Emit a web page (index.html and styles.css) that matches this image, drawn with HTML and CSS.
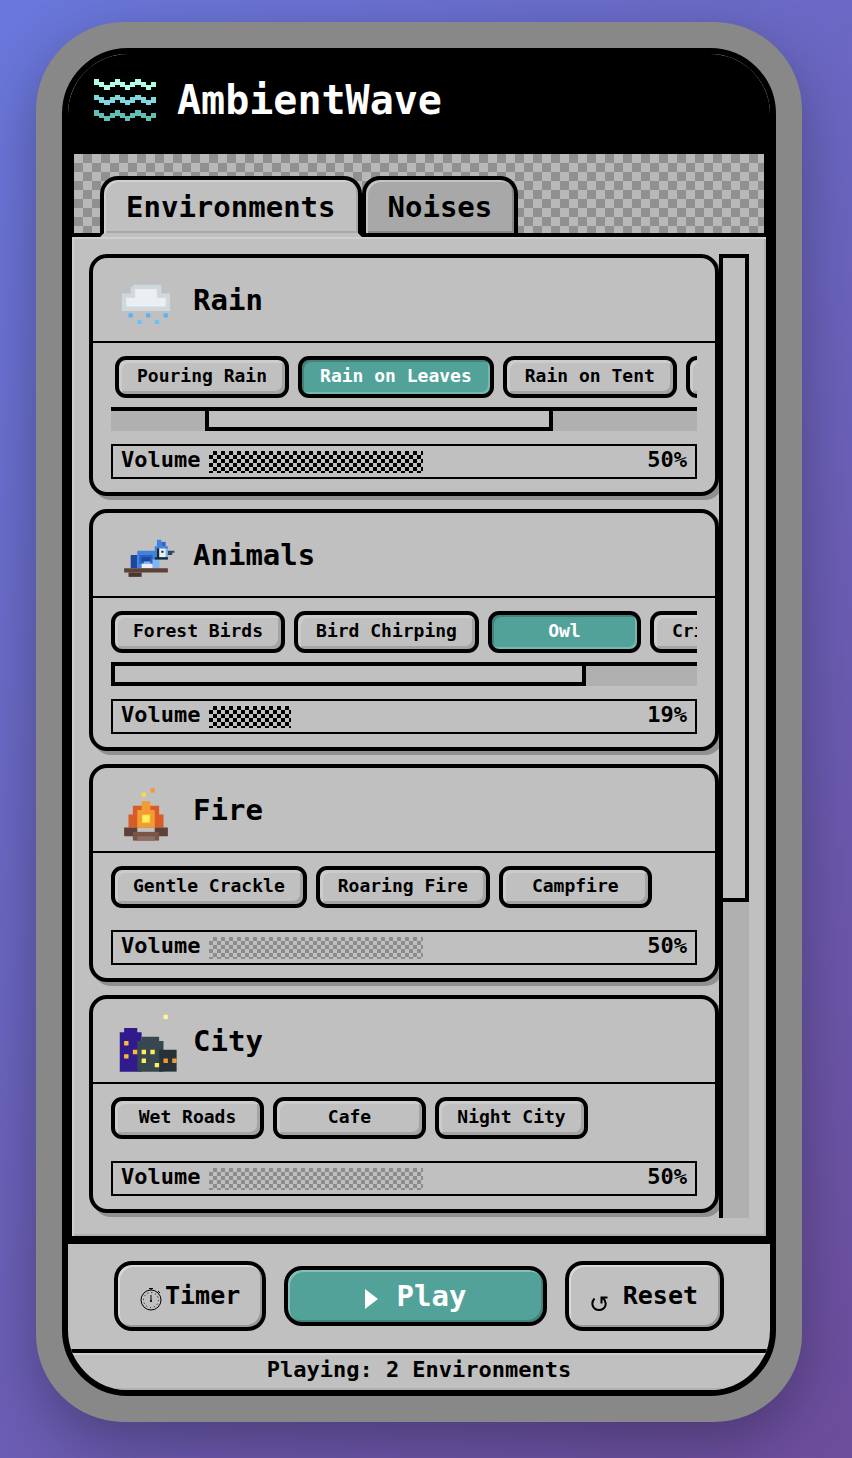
FILE: index.html
```html
<!DOCTYPE html>
<html lang="en">
<head>
  <meta charset="UTF-8" />
  <meta name="viewport" content="width=device-width, initial-scale=1" />
  <title>AmbientWave</title>
  <link rel="stylesheet" href="styles.css">
</head>
<body>

  <div class="device">
    <div class="screen">

      <header class="header">
        <svg class="logo" viewBox="0 0 24 16" shape-rendering="crispEdges" aria-hidden="true">
          <defs>
            <path id="wave" d="M0 0h2v2h-2zM2 1h2v2h-2zM4 2h2v2h-2zM6 1h2v2h-2zM8 0h2v2h-2zM10 1h2v2h-2zM12 2h2v2h-2zM14 1h2v2h-2zM16 0h2v2h-2zM18 1h2v2h-2zM20 2h2v2h-2zM22 1h2v2h-2z"/>
          </defs>
          <use href="#wave" fill="#b2ffe8"/>
          <use href="#wave" y="6" fill="#80d8de"/>
          <use href="#wave" y="12" fill="#5fbfb5"/>
        </svg>
        <h1>AmbientWave</h1>
      </header>

      <main class="main">
        <div class="tabs" role="tablist">
          <button class="tab active" role="tab" aria-selected="true">Environments</button>
          <button class="tab" role="tab" aria-selected="false">Noises</button>
        </div>

        <div class="panel" role="tabpanel">
          <div class="list">

            <section class="card">
              <div class="card-head">
                <svg class="card-icon" viewBox="0 0 16 16" aria-hidden="true">
                  <path fill="#cfd8dc" d="M5 4.5h6.5v2h2v4h-11v-4h2v-1.500h.5z"/>
                  <path fill="#eceff1" d="M5.500 5.500h5v2h2v2h-9v-2h2z"/>
                  <path fill="#5eb1f0" d="M4 11h1v1h-1zM8 11h1v1h-1zM12 11h1v1h-1z"/>
                  <path fill="#72bff7" d="M6 12.500h1v1h-1zM10 12.500h1v1h-1z"/>
                </svg>
                <h2>Rain</h2>
              </div>
              <div class="card-body">
                <div class="chips shifted">
                  <button class="chip">Pouring Rain</button>
                  <button class="chip on">Rain on Leaves</button>
                  <button class="chip">Rain on Tent</button>
                  <button class="chip">Rain on Roof</button>
                </div>
                <div class="hscroll"><div class="hthumb" style="margin-left:16%;width:59.500%"></div></div>
                <div class="volume">
                  <label for="vol-rain">Volume</label>
                  <input type="range" id="vol-rain" min="0" max="100" value="50" style="--level:50%">
                  <output for="vol-rain">50%</output>
                </div>
              </div>
            </section>

            <section class="card">
              <div class="card-head">
                <svg class="card-icon" viewBox="0 0 16 16" aria-hidden="true">
                  <path fill="#1f469f" d="M4.500 8h1.500v3h-1.500z"/>
                  <path fill="#3f83dc" d="M6 7h4v-1h.5v-1.500h1v1.500h1.500v3h-2v2h-5z"/>
                  <path fill="#2f66c8" d="M11.500 5h1v1h-1z"/>
                  <path fill="#2d5fc0" d="M6.500 8h3v2h-3z"/>
                  <path fill="#1f469f" d="M7 8.500h2v1h-2z"/>
                  <path fill="#7db5f5" d="M9.500 9h1.500v2h-1.500zM7.500 9.500h1.500v.5h-1.500zM12.500 6.500h.5v2h-.5z"/>
                  <path fill="#eceff1" d="M7 10h2.500v1h-2.500zM11 6.500h1.500v2h-1.500z"/>
                  <path fill="#1c2830" d="M10.500 6.500h.5v2h2v.5h-3v-.5h.5zM11.500 7h.5v.5h-.5z"/>
                  <path fill="#37474f" d="M13 7h1.500v.5h-.5v.5h-1z"/>
                  <path fill="#5d4037" d="M3 11h10v1h-10z"/>
                  <path fill="#4e342e" d="M4 12h3v1h-3z"/>
                </svg>
                <h2>Animals</h2>
              </div>
              <div class="card-body">
                <div class="chips">
                  <button class="chip">Forest Birds</button>
                  <button class="chip">Bird Chirping</button>
                  <button class="chip on">Owl</button>
                  <button class="chip">Cricket Night</button>
                </div>
                <div class="hscroll"><div class="hthumb" style="width:81%"></div></div>
                <div class="volume">
                  <label for="vol-animals">Volume</label>
                  <input type="range" id="vol-animals" min="0" max="100" value="19" style="--level:19%">
                  <output for="vol-animals">19%</output>
                </div>
              </div>
            </section>

            <section class="card">
              <div class="card-head">
                <svg class="card-icon" viewBox="0 0 16 16" aria-hidden="true">
                  <path fill="#d95b26" d="M5 7h6v2h1v3h-8v-3h1z"/>
                  <path fill="#f29b34" d="M7 6h2v2h1v4h-4v-4h1zM9 3h1v1h-1z"/>
                  <path fill="#fbc02d" d="M7 9h2v2h-2z"/>
                  <path fill="#fff05f" d="M7.200 9.200h1.600v1.600h-1.600z"/>
                  <path fill="#fdd843" d="M7 4h1v1h-1z"/>
                  <path fill="#5d4037" d="M3 12h3v2h-3zM10 12h3v2h-3z"/>
                  <path fill="#795548" d="M5 13h6v2h-6z"/>
                  <path fill="#8d6e63" d="M6 14h4v1h-4z"/>
                </svg>
                <h2>Fire</h2>
              </div>
              <div class="card-body">
                <div class="chips">
                  <button class="chip">Gentle Crackle</button>
                  <button class="chip">Roaring Fire</button>
                  <button class="chip">Campfire</button>
                </div>
                <div class="volume idle">
                  <label for="vol-fire">Volume</label>
                  <input type="range" id="vol-fire" min="0" max="100" value="50" style="--level:50%">
                  <output for="vol-fire">50%</output>
                </div>
              </div>
            </section>

            <section class="card">
              <div class="card-head">
                <svg class="card-icon" viewBox="0 0 16 16" aria-hidden="true">
                  <path fill="#fff59d" d="M12 2h1v1h-1z"/>
                  <path fill="#311b8c" d="M3 5h3v1h1v9h-5v-9h1z"/>
                  <path fill="#37474f" d="M7 7h4v1h1v7h-6v-7h1z"/>
                  <path fill="#263238" d="M11 10h4v5h-4z"/>
                  <path fill="#ffb93f" d="M3 8h1v1h-1zM3 11h1v1h-1zM5 10h1v1h-1z"/>
                  <path fill="#ffee58" d="M7 10h1v1h-1zM9 10h1v1h-1zM7 12h1v1h-1zM10 13h1v1h-1z"/>
                  <path fill="#f79833" d="M12 12h1v1h-1zM14 12h1v1h-1z"/>
                </svg>
                <h2>City</h2>
              </div>
              <div class="card-body">
                <div class="chips">
                  <button class="chip">Wet Roads</button>
                  <button class="chip">Cafe</button>
                  <button class="chip">Night City</button>
                </div>
                <div class="volume idle">
                  <label for="vol-city">Volume</label>
                  <input type="range" id="vol-city" min="0" max="100" value="50" style="--level:50%">
                  <output for="vol-city">50%</output>
                </div>
              </div>
            </section>

          </div>
          <div class="vscroll"><div class="vthumb" style="height:67.200%"></div></div>
        </div>
      </main>

      <footer class="controls">
        <button class="btn timer">
          <svg width="22" height="30" viewBox="0 0 22 30" fill="none" stroke="#000" aria-hidden="true">
            <circle cx="11" cy="19" r="10"/>
            <circle cx="11" cy="19" r="7.500" stroke-dasharray="1 2.930"/>
            <path d="M9 7.500h4M11 7v2M18 10l2 2M11 14v7" />
            <circle cx="11" cy="20" r="1" fill="#000" stroke="none"/>
          </svg>
          Timer
        </button>
        <button class="btn play">
          <svg width="14" height="26" viewBox="0 0 14 26" aria-hidden="true">
            <path d="M0 6v20l13-10z" fill="#fff"/>
          </svg>
          Play
        </button>
        <button class="btn reset">
          <svg width="18" height="30" viewBox="0 0 18 30" fill="none" stroke="#000" stroke-width="2" aria-hidden="true">
            <path d="M3.500 17.500C-.5 22 1.500 29 8 29C14.500 29 17 22 12 17M10.500 22.500v-6h6"/>
          </svg>
          Reset
        </button>
      </footer>

      <div class="status" role="status">Playing: 2 Environments</div>

    </div>
  </div>

</body>
</html>
```
FILE: styles.css
```css
:root{
  --face:#c0c0c0;
  --track:#b0b0b0;
  --teal:#52a29a;
  --light:#d8d8d8;
  --shade:#989898;
}
*{box-sizing:border-box;margin:0;padding:0}
body{
  min-height:100vh;
  padding:22px 50px 36px 36px;
  background:linear-gradient(135deg,#6a78dc 0%,#6c4d9c 100%);
  font-family:"DejaVu Sans Mono","Liberation Mono",monospace;
  font-weight:700;
  color:#000;
}
button{font:inherit;color:inherit;cursor:pointer}

/* ---------- device ---------- */
.device{
  padding:26px;
  background:#888;
  border-radius:88px;
  box-shadow:0 20px 60px rgba(0,0,0,.3);
}
.screen{
  border:6px solid #000;
  border-radius:66px;
  background:var(--face);
  overflow:hidden;
}
.header{
  display:flex;
  align-items:center;
  gap:21px;
  height:100px;
  padding:0 26px 8px;
  background:#000;
  color:#fff;
}
.logo{width:62px;height:42px}
h1{font-size:40px;line-height:48px}

/* ---------- tabs ---------- */
.main{
  padding:0 4px 8px;
  background:#000;
}
.tabs{
  display:flex;
  margin:0 2px;
  padding:22px 26px 0;
  background:repeating-conic-gradient(#909090 0 25%,#b8b8b8 0 50%) 0 0/18px 18px;
}
.tab{
  height:57px;
  padding:0 22px;
  border:4px solid #000;
  border-bottom:0;
  border-radius:18px 18px 0 0;
  background:#a8a8a8;
  box-shadow:inset 2px 2px 0 #c4c4c4,inset -2px -2px 0 #888;
  font-size:29px;
}
.tab.active{
  height:61px;
  margin-bottom:-4px;
  border-bottom:4px solid var(--face);
  background:var(--face);
  box-shadow:inset 2px 2px 0 #d0d0d0,inset -2px -2px 0 #a8a8a8;
  position:relative;
}

/* ---------- list ---------- */
.panel{
  display:flex;
  margin-top:4px;
  padding:17px 17px 18px;
  background:var(--face);
  box-shadow:inset 2px 2px 0 #d0d0d0,inset -2px -2px 0 #b0b0b0;
}
.list{
  flex:1;
  min-width:0;
  display:flex;
  flex-direction:column;
  gap:13px;
  padding-bottom:5px;
  overflow:hidden;
}
.card{
  border:4px solid #000;
  border-radius:18px;
  background:var(--face);
  box-shadow:4px 4px 0 #909090;
}
.card-head{
  display:flex;
  align-items:center;
  gap:12px;
  height:85px;
  padding:0 18px;
  border-bottom:2px solid #000;
}
.card-icon{width:70px;height:70px}
h2{font-size:29px;line-height:36px}
.card-body{padding:13px 18px}
.chips{
  display:flex;
  gap:9px;
  padding-bottom:9px;
  overflow:hidden;
}
.chips.shifted{padding-left:4px}
.chip{
  flex:none;
  min-width:153px;
  height:42px;
  padding:0 18px 4px;
  border:4px solid #000;
  border-radius:11px;
  background:var(--face);
  box-shadow:inset 3px 3px 0 #ccc,inset -3px -3px 0 #a4a4a4;
  font-size:18px;
}
.chip.on{
  background:var(--teal);
  color:#fff;
  box-shadow:inset 2px 2px 0 #43827b,inset -2px -2px 0 #74b8b1;
}

/* ---------- scrollbars ---------- */
.hscroll{
  height:24px;
  border-top:4px solid #000;
  background:var(--track);
}
.hthumb{
  height:100%;
  border:4px solid #000;
  border-top:0;
  background:var(--face);
}
.vscroll{
  width:30px;
  border-left:4px solid #000;
  background:var(--track);
}
.vthumb{
  border:4px solid #000;
  border-left:0;
  background:var(--face);
}

/* ---------- volume ---------- */
.volume{
  --ink:#000;
  display:flex;
  align-items:center;
  gap:9px;
  height:35px;
  margin-top:13px;
  padding:0 8px;
  border:2px solid #000;
  font-size:22px;
  line-height:26px;
}
.volume label,.volume output{padding-bottom:3px}
.volume.idle{--ink:#8c8c8c}
.volume input{
  appearance:none;
  flex:1;
  min-width:0;
  height:22px;
  background:
    linear-gradient(to right,transparent var(--level),var(--face) var(--level)),
    repeating-conic-gradient(var(--ink) 0 25%,var(--face) 0 50%) 0 0/8px 8px;
}
.volume input::-webkit-slider-thumb{
  appearance:none;
  width:1px;
  height:22px;
}

/* ---------- footer ---------- */
.controls{
  display:flex;
  align-items:center;
  gap:18px;
  height:105px;
  padding:0 46px 2px;
}
.btn{
  display:flex;
  align-items:center;
  justify-content:center;
  height:70px;
  padding:0 22px;
  border:4px solid #000;
  border-radius:18px;
  background:var(--face);
  box-shadow:inset 2px 2px 0 var(--light),inset -2px -2px 0 var(--shade);
  font-size:25px;
}
.timer{gap:3px}
.reset{gap:14px}
.play{
  flex:1;
  height:60px;
  gap:18px;
  background:var(--teal);
  color:#fff;
  box-shadow:inset 2px 2px 0 #86bfb9,inset -2px -2px 0 #42827b;
  font-size:29px;
}
.status{
  height:41px;
  border-top:4px solid #000;
  box-shadow:inset 0 2px 0 #d0d0d0,inset 0 -2px 0 #b0b0b0;
  font-size:22px;
  line-height:34px;
  text-align:center;
}
```
